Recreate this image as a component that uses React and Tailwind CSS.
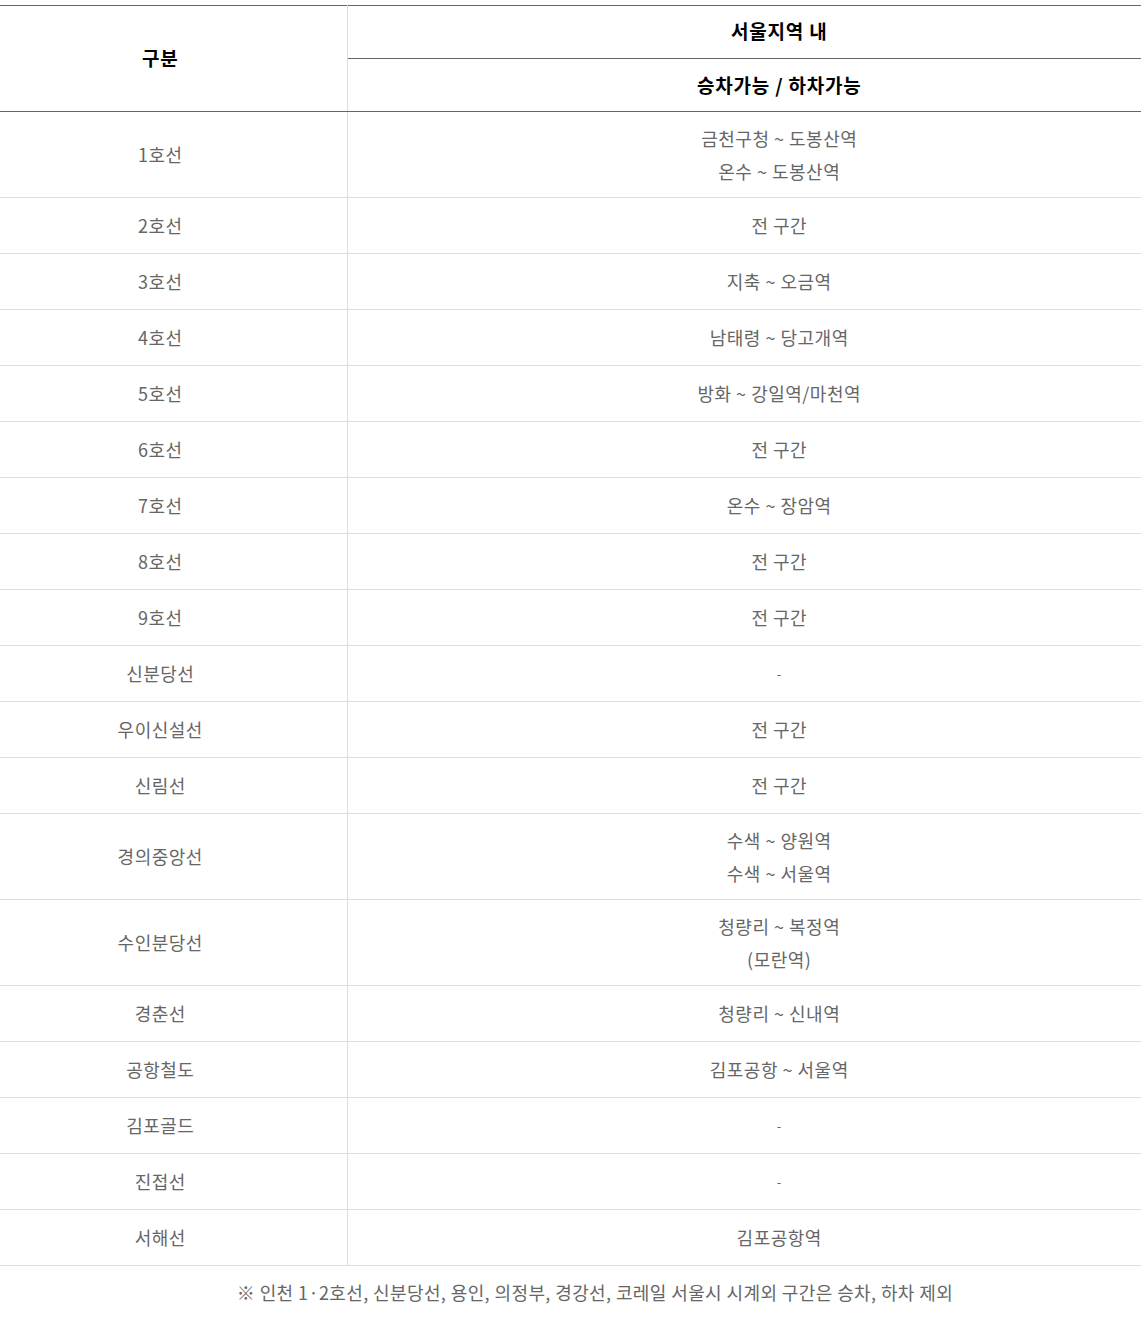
import React from "react";

// 노선별 승하차 가능 구간
const rows = [
  { line: "1호선", area: ["금천구청 ~ 도봉산역", "온수 ~ 도봉산역"] },
  { line: "2호선", area: ["전 구간"] },
  { line: "3호선", area: ["지축 ~ 오금역"] },
  { line: "4호선", area: ["남태령 ~ 당고개역"] },
  { line: "5호선", area: ["방화 ~ 강일역/마천역"] },
  { line: "6호선", area: ["전 구간"] },
  { line: "7호선", area: ["온수 ~ 장암역"] },
  { line: "8호선", area: ["전 구간"] },
  { line: "9호선", area: ["전 구간"] },
  { line: "신분당선", area: ["-"] },
  { line: "우이신설선", area: ["전 구간"] },
  { line: "신림선", area: ["전 구간"] },
  { line: "경의중앙선", area: ["수색 ~ 양원역", "수색 ~ 서울역"] },
  { line: "수인분당선", area: ["청량리 ~ 복정역", "(모란역)"] },
  { line: "경춘선", area: ["청량리 ~ 신내역"] },
  { line: "공항철도", area: ["김포공항 ~ 서울역"] },
  { line: "김포골드", area: ["-"] },
  { line: "진접선", area: ["-"] },
  { line: "서해선", area: ["김포공항역"] },
];

export default function App() {
  return (
    <div
      className="w-[1142px] bg-white pt-[5px]"
      style={{ fontFamily: '"Noto Sans CJK KR", "Noto Sans", sans-serif' }}
    >
      <table className="w-[1141px] border-collapse table-fixed">
        <colgroup>
          <col className="w-[347px]" />
          <col />
        </colgroup>
        <thead>
          <tr className="border-t border-[#666]">
            <th
              rowSpan={2}
              className="border-b border-r border-b-[#666] border-r-[#ddd] pr-[26px] text-center text-[19px] tracking-[0.8px] font-bold text-black"
            >
              구분
            </th>
            <th className="h-[53px] border-b border-[#666] pl-[70px] pb-[1px] text-center text-[19px] tracking-[0.8px] font-bold text-black">
              서울지역 내
            </th>
          </tr>
          <tr>
            <th className="h-[53px] border-b border-[#666] pl-[70px] text-center text-[19px] tracking-[0.8px] font-bold text-black">
              승차가능 / 하차가능
            </th>
          </tr>
        </thead>
        <tbody>
          {rows.map((r) => (
            <tr key={r.line} className="border-b border-[#ddd]">
              <td className="h-[56px] border-r border-[#ddd] py-[9.5px] pr-[26px] text-center text-[18px] tracking-[0.5px] leading-[33px] text-[#666]">
                {r.line}
              </td>
              <td className="h-[56px] py-[9.5px] pl-[70px] text-center text-[18px] tracking-[0.5px] leading-[33px] text-[#666]">
                {r.area.map((a) => (
                  <div key={a} className={a === "-" ? "text-[13px]" : ""}>
                    {a}
                  </div>
                ))}
              </td>
            </tr>
          ))}
        </tbody>
      </table>
      <p className="pl-[48px] pt-[11px] pb-[12px] text-center text-[18px] tracking-[0.4px] leading-[31px] text-[#666]">
        ※ 인천 1·2호선, 신분당선, 용인, 의정부, 경강선, 코레일 서울시 시계외 구간은 승차, 하차 제외
      </p>
    </div>
  );
}
